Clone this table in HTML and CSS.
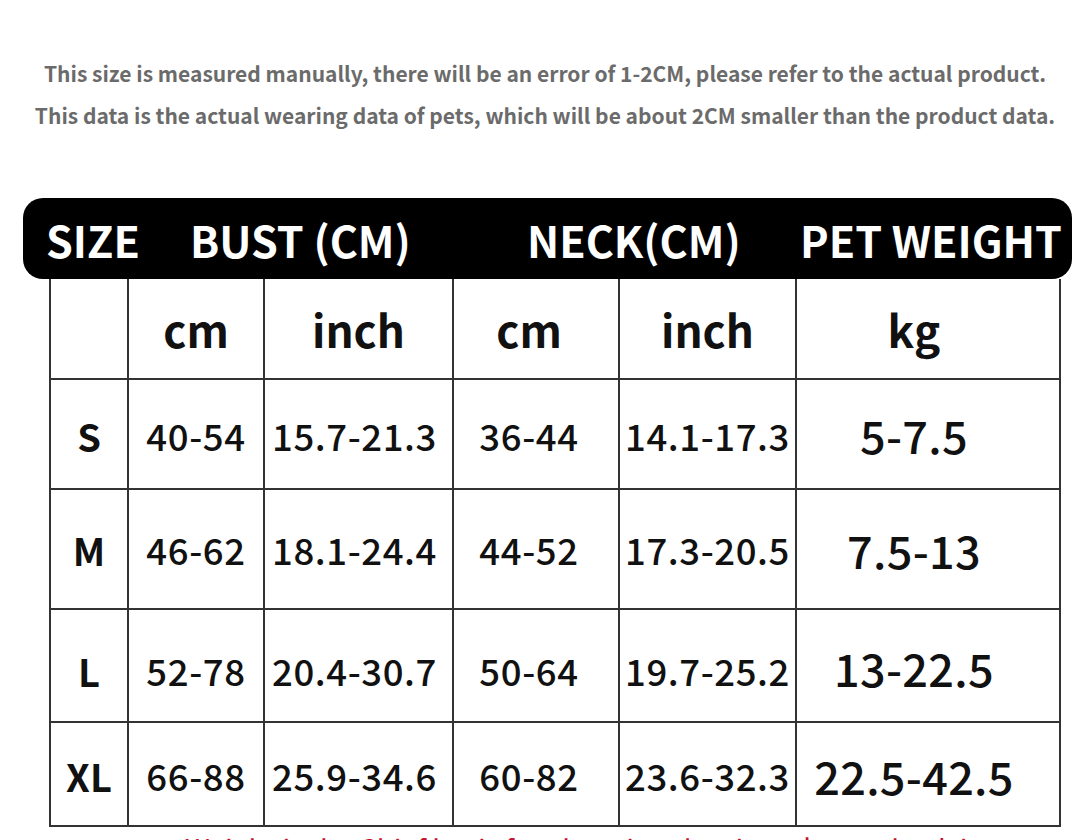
FILE: index.html
```html
<!DOCTYPE html>
<html lang="en">
<head>
<meta charset="utf-8">
<title>Size chart</title>
<link rel="stylesheet" href="styles.css">
</head>
<body>
<div class="page">
  <div class="notes">
    <p class="note n1">This size is measured manually, there will be an error of 1-2CM, please refer to the actual product.</p>
    <p class="note n2">This data is the actual wearing data of pets, which will be about 2CM smaller than the product data.</p>
  </div>

  <div class="bar">
    <span class="h h-size">SIZE</span>
    <span class="h h-bust">BUST (CM)</span>
    <span class="h h-neck">NECK(CM)</span>
    <span class="h h-weight">PET WEIGHT</span>
  </div>

  <table class="chart">
    <colgroup>
      <col class="c1"><col class="c2"><col class="c3"><col class="c4"><col class="c5"><col class="c6">
    </colgroup>
    <tr class="r0">
      <td></td><td class="unit">cm</td><td class="unit">inch</td><td class="unit neckcm">cm</td><td class="unit neckin">inch</td><td class="unit kg">kg</td>
    </tr>
    <tr class="r1">
      <td class="sz">S</td><td>40-54</td><td class="bustin">15.7-21.3</td><td class="neckcm">36-44</td><td class="neckin">14.1-17.3</td><td class="kg">5-7.5</td>
    </tr>
    <tr class="r2">
      <td class="sz">M</td><td>46-62</td><td class="bustin">18.1-24.4</td><td class="neckcm">44-52</td><td class="neckin">17.3-20.5</td><td class="kg">7.5-13</td>
    </tr>
    <tr class="r3">
      <td class="sz">L</td><td>52-78</td><td class="bustin">20.4-30.7</td><td class="neckcm">50-64</td><td class="neckin">19.7-25.2</td><td class="kg">13-22.5</td>
    </tr>
    <tr class="r4">
      <td class="sz">XL</td><td>66-88</td><td class="bustin">25.9-34.6</td><td class="neckcm">60-82</td><td class="neckin">23.6-32.3</td><td class="kg">22.5-42.5</td>
    </tr>
  </table>

  <p class="warn">Weight is the Chief basis for choosing the size, please check it.</p>
</div>
</body>
</html>
```

FILE: styles.css
```css
html, body {
  margin: 0;
  padding: 0;
  background: #ffffff;
}

.page {
  width: 1090px;
  height: 840px;
  overflow: hidden;
  font-family: "Noto Sans CJK SC", "Noto Sans", sans-serif;
}

.notes {
  padding-top: 52px;
}

.note {
  margin: 0;
  text-align: center;
  color: #6b6b6b;
  font-size: 21px;
  line-height: 42px;
  font-weight: 600;
  white-space: nowrap;
}

.bar {
  margin: 62px 0 0 23px;
  width: 1049px;
  height: 81px;
  box-sizing: border-box;
  background: #000;
  border-radius: 20px;
  display: flex;
  align-items: center;
  padding-left: 23px;
  color: #fff;
  font-size: 43px;
  font-weight: 600;
  white-space: nowrap;
}

.h { display: block; flex: none; }
.h-size { width: 144px; }
.h-bust { width: 337px; }
.h-neck { width: 273px; }

.chart {
  margin-left: 49px;
  width: 1012px;
  border-collapse: collapse;
  table-layout: fixed;
  color: #111;
}

.c1 { width: 78px; }
.c2 { width: 136px; }
.c3 { width: 189px; }
.c4 { width: 166px; }
.c5 { width: 177px; }
.c6 { width: 264px; }

.chart td {
  border: 2px solid #333;
  padding: 0;
  text-align: center;
  vertical-align: middle;
  font-size: 36.5px;
  letter-spacing: 0.6px;
  font-weight: 500;
  white-space: nowrap;
}

.chart tr.r0 td { border-top: none; }

.r0 { height: 100px; }
.r1 { height: 110px; }
.r2 { height: 120px; }
.r3 { height: 113px; }
.r4 { height: 104px; }

.r1 td { padding-top: 2px; }
.r2 td { padding-top: 0; }
.r3 td { padding-top: 10px; }
.r4 td { padding-top: 2px; }

.chart td.bustin { padding-right: 8px; }

.chart td.unit {
  font-size: 44px;
  letter-spacing: 0;
  font-weight: 700;
}

.chart td.sz {
  font-size: 38px;
  letter-spacing: 0;
  font-weight: 700;
}

.chart td.neckcm { padding-right: 14px; }

.chart td.kg {
  font-size: 45px;
  letter-spacing: 0.3px;
  padding-right: 28px;
}

.chart .r1 td.kg, .chart .r2 td.kg { padding-top: 0; }
.chart .r3 td.kg { padding-top: 4px; }

.chart td.unit.kg { font-size: 44px; }

.warn {
  margin: 1px 0 0 185px;
  color: #c8102e;
  font-size: 28px;
  line-height: 40px;
  white-space: nowrap;
}
```
